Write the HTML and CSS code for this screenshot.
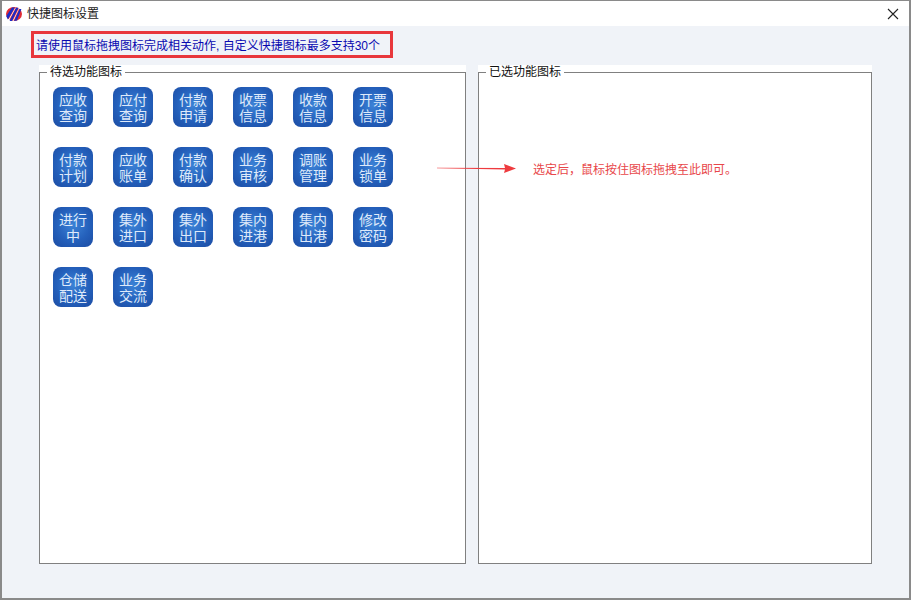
FILE: index.html
```html
<!DOCTYPE html>
<html lang="zh-CN">
<head>
    <meta charset="UTF-8">
    <title>快捷图标设置</title>
    <link rel="stylesheet" href="styles.css">
</head>
<body>
    <div class="window">
        <div class="titlebar">
            <svg class="logo" width="16" height="14" viewBox="0 0 16 14">
                <ellipse cx="8" cy="7" rx="8" ry="7" fill="#e02b35"/>
                <path d="M0.3 9 L6 0.5 H8.8 L1.8 12.6 Z M3.6 14 L10 0.8 H12.4 L6 14 Z M8.2 14 L13.6 2 H15.4 L11 13.4 Z" fill="#1a2cc8"/>
                <path d="M2.2 13 L9.2 0.8 H9.8 L3 13.6 Z M6.6 14 L12.8 1.2 H13.3 L7.5 14 Z" fill="#fff"/>
            </svg>
            <span class="title">快捷图标设置</span>
            <svg class="close" width="12" height="12" viewBox="0 0 12 12">
                <path d="M1 1 L11 11 M11 1 L1 11" stroke="#222" stroke-width="1.1" fill="none"/>
            </svg>
        </div>
        <div class="content">
            <div class="notice">请使用鼠标拖拽图标完成相关动作, 自定义快捷图标最多支持30个</div>
            <div class="panels">
                <div class="panel panel-left">
                    <fieldset>
                        <legend>待选功能图标</legend>
                        <div class="icons">
                            <div class="icon">应收<br>查询</div>
                            <div class="icon">应付<br>查询</div>
                            <div class="icon">付款<br>申请</div>
                            <div class="icon">收票<br>信息</div>
                            <div class="icon">收款<br>信息</div>
                            <div class="icon">开票<br>信息</div>
                            <div class="icon">付款<br>计划</div>
                            <div class="icon">应收<br>账单</div>
                            <div class="icon">付款<br>确认</div>
                            <div class="icon">业务<br>审核</div>
                            <div class="icon">调账<br>管理</div>
                            <div class="icon">业务<br>锁单</div>
                            <div class="icon">进行<br>中</div>
                            <div class="icon">集外<br>进口</div>
                            <div class="icon">集外<br>出口</div>
                            <div class="icon">集内<br>进港</div>
                            <div class="icon">集内<br>出港</div>
                            <div class="icon">修改<br>密码</div>
                            <div class="icon">仓储<br>配送</div>
                            <div class="icon">业务<br>交流</div>
                        </div>
                    </fieldset>
                </div>
                <div class="panel panel-right">
                    <fieldset>
                        <legend>已选功能图标</legend>
                    </fieldset>
                </div>
                <svg class="arrow" width="80" height="12" viewBox="0 0 80 12">
                    <path d="M0 5.7 L68 6 L67 2 L79 6.5 L67 11 L68 7.5 L0 6.3 Z" fill="#ee3b3f"/>
                </svg>
                <div class="hint">选定后，鼠标按住图标拖拽至此即可。</div>
            </div>
        </div>
    </div>
</body>
</html>
```

FILE: styles.css
```css
* {
    box-sizing: border-box;
}
html, body {
    margin: 0;
    padding: 0;
}
body {
    width: 911px;
    height: 601px;
    overflow: hidden;
    font-family: "Liberation Sans", "Noto Sans CJK SC", sans-serif;
    font-size: 12px;
}
.window {
    width: 911px;
    height: 600px;
    display: flex;
    flex-direction: column;
    background-color: #f0f3f8;
    border: 2px solid #8a8a8a;
    border-top-width: 1px;
}
.titlebar {
    height: 25px;
    flex-shrink: 0;
    display: flex;
    align-items: center;
    padding: 0 10px 0 4px;
    background-color: #fff;
    color: #222;
}
.logo {
    margin-right: 5px;
}
.title {
    flex-grow: 1;
    line-height: 24px;
}
.content {
    flex-grow: 1;
    display: flex;
    flex-direction: column;
    padding: 5px 0 0 29px;
}
.notice {
    width: 362px;
    height: 27px;
    border: 3px solid #e8373c;
    padding-left: 2px;
    line-height: 24px;
    color: #0808b0;
    white-space: nowrap;
}
.panels {
    position: relative;
    display: flex;
    gap: 12px;
    margin-top: 7px;
    margin-left: 8px;
}
.panel {
    background-color: #fff;
    height: 499px;
}
.panel-left {
    width: 427px;
}
.panel-right {
    width: 394px;
}
fieldset {
    margin: 0;
    height: 100%;
    padding: 0;
    border: 1px solid #808080;
    min-width: 0;
}
legend {
    margin-left: 7px;
    padding: 0 3px;
    line-height: 14px;
    color: #111;
}
.icons {
    display: grid;
    grid-template-columns: repeat(6, 40px);
    grid-auto-rows: 40px;
    gap: 20px;
    padding: 8px 0 0 13px;
}
.icon {
    border-radius: 8px;
    background: radial-gradient(circle at 50% 45%, #3c82d6 0%, #2460bb 55%, #1c4ca3 100%);
    color: #dfeafa;
    font-size: 14px;
    line-height: 16px;
    text-align: center;
    padding-top: 5px;
}
.arrow {
    position: absolute;
    left: 398px;
    top: 97px;
}
.hint {
    position: absolute;
    left: 494px;
    top: 96px;
    line-height: 18px;
    color: #e8474a;
    white-space: nowrap;
}
```
